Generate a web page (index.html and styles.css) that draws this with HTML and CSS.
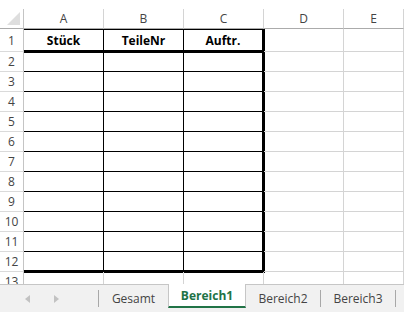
FILE: index.html
```html
<!DOCTYPE html>
<html lang="de">
<head>
    <meta charset="UTF-8">
    <title>Bereich1</title>
    <link rel="stylesheet" href="styles.css">
</head>
<body>
    <div class="sheet">
        <div class="row head">
            <div class="rh corner"><svg width="13" height="13" viewBox="0 0 13 13"><polygon points="13,0 13,13 0,13" fill="#dedede"/></svg></div>
            <div class="cell ca">A</div><div class="cell cb">B</div><div class="cell cc">C</div><div class="cell cd">D</div><div class="cell ce">E</div>
        </div>
        <div class="row r1">
            <div class="rh">1</div>
            <div class="cell ca t top hd">Stück</div><div class="cell cb t top hd">TeileNr</div><div class="cell cc t top hd end">Auftr.</div><div class="cell cd"></div><div class="cell ce"></div>
        </div>
        <div class="row"><div class="rh">2</div><div class="cell ca t"></div><div class="cell cb t"></div><div class="cell cc t end"></div><div class="cell cd"></div><div class="cell ce"></div></div>
        <div class="row"><div class="rh">3</div><div class="cell ca t"></div><div class="cell cb t"></div><div class="cell cc t end"></div><div class="cell cd"></div><div class="cell ce"></div></div>
        <div class="row"><div class="rh">4</div><div class="cell ca t"></div><div class="cell cb t"></div><div class="cell cc t end"></div><div class="cell cd"></div><div class="cell ce"></div></div>
        <div class="row"><div class="rh">5</div><div class="cell ca t"></div><div class="cell cb t"></div><div class="cell cc t end"></div><div class="cell cd"></div><div class="cell ce"></div></div>
        <div class="row"><div class="rh">6</div><div class="cell ca t"></div><div class="cell cb t"></div><div class="cell cc t end"></div><div class="cell cd"></div><div class="cell ce"></div></div>
        <div class="row"><div class="rh">7</div><div class="cell ca t"></div><div class="cell cb t"></div><div class="cell cc t end"></div><div class="cell cd"></div><div class="cell ce"></div></div>
        <div class="row"><div class="rh">8</div><div class="cell ca t"></div><div class="cell cb t"></div><div class="cell cc t end"></div><div class="cell cd"></div><div class="cell ce"></div></div>
        <div class="row"><div class="rh">9</div><div class="cell ca t"></div><div class="cell cb t"></div><div class="cell cc t end"></div><div class="cell cd"></div><div class="cell ce"></div></div>
        <div class="row"><div class="rh">10</div><div class="cell ca t"></div><div class="cell cb t"></div><div class="cell cc t end"></div><div class="cell cd"></div><div class="cell ce"></div></div>
        <div class="row"><div class="rh">11</div><div class="cell ca t"></div><div class="cell cb t"></div><div class="cell cc t end"></div><div class="cell cd"></div><div class="cell ce"></div></div>
        <div class="row"><div class="rh">12</div><div class="cell ca t last"></div><div class="cell cb t last"></div><div class="cell cc t last end"></div><div class="cell cd"></div><div class="cell ce"></div></div>
        <div class="row"><div class="rh">13</div><div class="cell ca"></div><div class="cell cb"></div><div class="cell cc"></div><div class="cell cd"></div><div class="cell ce"></div></div>
    </div>

    <div class="tabs">
        <div class="nav">
            <svg width="5" height="8" viewBox="0 0 5 8"><polygon points="5,0 5,8 0,4" fill="#c2c2c2"/></svg>
            <svg width="5" height="8" viewBox="0 0 5 8"><polygon points="0,0 0,8 5,4" fill="#c2c2c2"/></svg>
        </div>
        <span class="sep"></span>
        <div class="tab g">Gesamt</div>
        <div class="tab active">Bereich1</div>
        <div class="tab">Bereich2</div>
        <span class="sep"></span>
        <div class="tab">Bereich3</div>
        <span class="sep"></span>
    </div>
</body>
</html>
```

FILE: styles.css
```css
body { margin: 0; width: 404px; height: 312px; overflow: hidden; background: #fff; font-family: "Open Sans", "Liberation Sans", sans-serif; }

.sheet { height: 284px; padding-top: 9px; box-sizing: border-box; overflow: hidden; }
.row { display: flex; height: 20px; }
.row.r1 { height: 23px; }

.rh, .cell { flex: none; box-sizing: border-box; display: flex; align-items: center; justify-content: center; border-right: 1px solid #d4d4d4; border-bottom: 1px solid #d4d4d4; }
.rh { width: 24px; font-size: 12px; color: #444; border-right-color: #c4c4c4; border-bottom-color: #dadada; }
.corner { align-items: flex-end; justify-content: flex-end; padding: 0 3px 3px 0; }
.ca, .cb, .cc { width: 80px; }
.cd { width: 80px; }
.ce { flex: 1; }
.head .rh, .head .cell { border-bottom-color: #ababab; font-size: 12px; color: #444; }

.t { border-right-color: #000; border-bottom-color: #000; font-size: 12px; font-weight: bold; color: #000; }
.top { border-top: 1px solid #000; }
.hd, .last { border-bottom: 2px solid #000; box-shadow: 0 1px 0 #000; }
.end { border-right: 2px solid #000; box-shadow: 1px 0 0 #000; }
.hd.end, .last.end { box-shadow: 1px 0 0 #000, 0 1px 0 #000, 1px 1px 0 #000; }

.tabs { display: flex; height: 28px; box-sizing: border-box; border-top: 1px solid #c6c6c6; background: #f1f1f1; font-size: 12px; color: #444; }
.nav { width: 98px; display: flex; align-items: center; gap: 24px; padding-left: 25px; box-sizing: border-box; }
.sep { width: 1px; height: 17px; align-self: center; background: #a8a8a8; }
.tab { width: 74px; display: flex; align-items: center; justify-content: center; }
.tab.g { width: 69px; }
.tab.active { width: 78px; height: 24px; margin-top: -1px; box-sizing: border-box; background: #fff; border-left: 1px solid #c6c6c6; border-right: 1px solid #c6c6c6; border-bottom: 2px solid #217346; color: #217346; font-weight: bold; }
```
